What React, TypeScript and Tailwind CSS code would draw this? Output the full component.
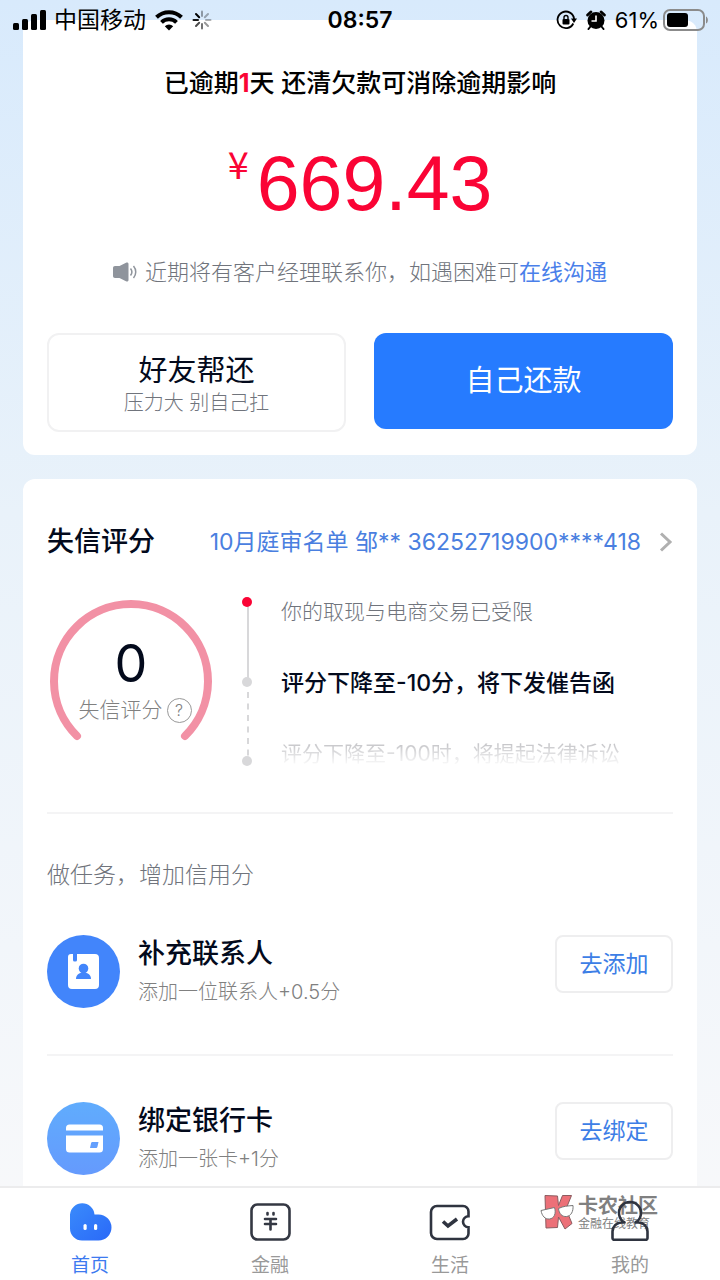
import type { ReactNode } from 'react';

interface Task {
  title: string;
  hint: string;
  action: string;
  icon: ReactNode;
}

interface Tab {
  label: string;
  active?: boolean;
  icon: ReactNode;
}

const SPINNER_OPACITY = [0.35, 0.3, 0.3, 0.4, 0.55, 0.7, 0.9, 1];

function StatusBar() {
  return (
    <header className="absolute inset-x-0 top-0 z-20 h-10 px-3 grid grid-cols-[1fr_auto_1fr] items-center text-black">
      <div className="flex items-center gap-2">
        <svg className="w-[34px] h-5" viewBox="0 0 34 20" aria-hidden="true">
          <rect x="1" y="13" width="6" height="7" rx="1.5" />
          <rect x="10" y="9" width="6" height="11" rx="1.5" />
          <rect x="19" y="4" width="6" height="16" rx="1.5" />
          <rect x="28" y="0" width="6" height="20" rx="1.5" />
        </svg>
        <span className="text-[23px] leading-8">中国移动</span>
        <svg className="w-[30px] h-[22px]" viewBox="0 0 30 22" fill="none" stroke="#000" strokeWidth="4" aria-hidden="true">
          <path d="M2.500 8.200a18 18 0 0 1 25 0" />
          <path d="M7.500 13.400a10.800 10.800 0 0 1 15 0" />
          <path d="M15 21.500l-4.200-4.300a6 6 0 0 1 8.400 0z" fill="#000" stroke="none" />
        </svg>
        <svg className="w-5 h-5" viewBox="0 0 20 20" stroke="#000" strokeWidth="2" strokeLinecap="round" aria-hidden="true">
          {SPINNER_OPACITY.map((opacity, i) => (
            <path key={i} d="M10 1.500v4.500" opacity={opacity} transform={`rotate(${i * 45} 10 10)`} />
          ))}
        </svg>
      </div>
      <span className="text-[23px] leading-8 font-semibold">08:57</span>
      <div className="flex items-center justify-end gap-2">
        <svg className="w-[21px] h-5" viewBox="0 0 21 20" fill="none" stroke="#000" strokeWidth="1.800" aria-hidden="true">
          <path d="M17.300 13.500a8.300 8.300 0 1 1 .8-4.500" />
          <path d="M15 8.500h6l-3 4.500z" fill="#000" stroke="none" />
          <rect x="6.500" y="9" width="7" height="5.500" rx="1" fill="#000" stroke="none" />
          <path d="M8 9V7.500a2 2 0 0 1 4 0V9" strokeWidth="1.400" />
        </svg>
        <svg className="w-[22px] h-5" viewBox="0 0 22 20" aria-hidden="true">
          <circle cx="11" cy="10.500" r="8.500" />
          <path d="M2.500 5 6 1.800M19.500 5 16 1.800" stroke="#000" strokeWidth="2.600" strokeLinecap="round" />
          <path d="m5.500 16.500-2 2.500M16.500 16.500l2 2.500" stroke="#000" strokeWidth="2" strokeLinecap="round" />
          <path d="M11 5.500v5.500H6.500" fill="none" stroke="#fff" strokeWidth="1.600" />
        </svg>
        <span className="text-[22px] leading-8">61%</span>
        <svg className="-ml-1 w-[45px] h-[22px]" viewBox="0 0 45 22" aria-hidden="true">
          <rect x="1" y="1" width="40" height="20" rx="6" fill="none" stroke="#8b8b8b" strokeWidth="2" />
          <rect x="4" y="4" width="21" height="14" rx="3" />
          <path d="M43 7.500c2.500 1 2.500 6 0 7z" fill="#8b8b8b" />
        </svg>
      </div>
    </header>
  );
}

function DebtCard() {
  return (
    <section className="bg-white rounded-xl px-6 pt-[45px] pb-[23px] text-center">
      <h1 className="text-[25px] leading-9 font-medium text-black">
        已逾期<span className="text-[#fa0435] font-bold">1</span>天 还清欠款可消除逾期影响
      </h1>
      <p className="mt-[42px] flex justify-center items-start gap-2 text-[#fa0435]">
        <span className="font-['Noto_Sans_CJK_SC',sans-serif] text-[38px] leading-10">¥</span>
        <span className="font-['Liberation_Sans',Arial,sans-serif] text-[77px] leading-20">669.43</span>
      </p>
      <p className="mt-[33px] flex justify-center items-center gap-2 text-[22px] leading-8 font-light text-[#70747c]">
        <svg className="w-6 h-5" viewBox="0 0 24 20" aria-hidden="true">
          <path d="M2 4h4.500L13 .8c1.200-.7 2.500-.2 2.500 1.200v16c0 1.400-1.300 1.900-2.500 1.200L6.500 16H2c-1.200 0-2-.8-2-2V6c0-1.200.8-2 2-2z" fill="#8f949c" />
          <path d="M17.500 6.500c1.600 2 1.600 5 0 7M20.500 4c3 3.500 3 8.500 0 12" fill="none" stroke="#8f949c" strokeWidth="1.500" />
        </svg>
        <span>
          近期将有客户经理联系你，如遇困难可<a href="#chat" className="font-normal text-[#4a80ea]">在线沟通</a>
        </span>
      </p>
      <div className="mt-[45px] grid grid-cols-2 gap-7 items-start">
        <button type="button" className="h-[99px] pt-1 rounded-xl border-2 border-[#f1f1f2] bg-white flex flex-col items-center justify-center">
          <span className="text-[29px] leading-9 text-[#030a1c]">好友帮还</span>
          <span className="text-[20px] leading-7 font-light text-[#70747c]">压力大 别自己扛</span>
        </button>
        <button type="button" className="h-24 rounded-xl bg-[#267bff] text-[29px] leading-9 text-white">
          自己还款
        </button>
      </div>
    </section>
  );
}

function ScoreGauge() {
  return (
    <div className="relative w-[168px] h-[168px] shrink-0">
      <svg className="absolute inset-0 w-full h-full" viewBox="0 0 168 168" aria-hidden="true">
        <path d="M30 140A77 77 0 1 1 138 140" fill="none" stroke="#f291a5" strokeWidth="8" strokeLinecap="round" />
      </svg>
      <div className="relative pt-10 flex flex-col items-center">
        <strong className="text-[52px] leading-[56px] font-normal text-[#030a1c]">0</strong>
        <span className="pl-2 flex items-center gap-1 text-[21px] leading-9 font-light text-[#808080]">
          失信评分
          <button
            type="button"
            aria-label="失信评分说明"
            className="w-[25px] h-[25px] rounded-full border border-[#999] text-[16px] leading-5"
          >
            ?
          </button>
        </span>
      </div>
    </div>
  );
}

function ScoreTimeline() {
  return (
    <div className="flex gap-7">
      <svg className="w-3 h-[172px] shrink-0" viewBox="0 0 12 172" aria-hidden="true">
        <path d="M7 6v80" stroke="#d8d8da" strokeWidth="2" />
        <path d="M7 96v64" stroke="#d8d8da" strokeWidth="2" strokeDasharray="6 5.500" />
        <circle cx="6" cy="6" r="5" fill="#fa0435" />
        <circle cx="6" cy="86" r="5" fill="#d8d8da" />
        <circle cx="6" cy="165" r="5" fill="#d8d8da" />
      </svg>
      <ul className="flex flex-col gap-[39px] text-[21px] leading-8">
        <li className="font-light text-[#70747c]">你的取现与电商交易已受限</li>
        <li className="text-[23px] font-medium text-[#030a1c]">评分下降至-10分，将下发催告函</li>
        <li className="bg-linear-to-b from-[#b8b8bc] to-white to-90% bg-clip-text text-transparent">评分下降至-100时，将提起法律诉讼</li>
      </ul>
    </div>
  );
}

const TASKS: Task[] = [
  {
    title: '补充联系人',
    hint: '添加一位联系人+0.5分',
    action: '去添加',
    icon: (
      <svg className="w-[73px] h-[73px] shrink-0" viewBox="0 0 73 73" aria-hidden="true">
        <circle cx="36.500" cy="36.500" r="36.500" fill="#4285fb" />
        <path d="M24 19h2v6a1.500 1.500 0 0 0 1.500 1.500h1A1.500 1.500 0 0 0 30 25v-6h18a4 4 0 0 1 4 4v27a4 4 0 0 1-4 4H25a4 4 0 0 1-4-4V22a3 3 0 0 1 3-3z" fill="#fff" />
        <circle cx="36.500" cy="33.500" r="4.800" fill="#4285fb" />
        <path d="M29 44c0-4 3-6.500 7.500-6.500S44 40 44 44z" fill="#4285fb" />
      </svg>
    ),
  },
  {
    title: '绑定银行卡',
    hint: '添加一张卡+1分',
    action: '去绑定',
    icon: (
      <svg className="w-[73px] h-[73px] shrink-0" viewBox="0 0 73 73" aria-hidden="true">
        <defs>
          <linearGradient id="card-bg" x1="0" y1="0" x2="0" y2="1">
            <stop offset="0" stopColor="#60acfd" />
            <stop offset="1" stopColor="#659afd" />
          </linearGradient>
        </defs>
        <circle cx="36.500" cy="36.500" r="36.500" fill="url(#card-bg)" />
        <path d="M19 28.500V26a3.500 3.500 0 0 1 3.500-3.500h30A3.500 3.500 0 0 1 56 26v2.500z" fill="#fff" />
        <path d="M19 33.500h37V47a3.500 3.500 0 0 1-3.500 3.500h-30A3.500 3.500 0 0 1 19 47z" fill="#fff" />
        <path d="M45.500 40h6l-1 4.500c-.3 1-.8 1.500-1.800 1.500H43l1-4.500c.2-1 .6-1.500 1.500-1.500z" fill="#639ffd" />
      </svg>
    ),
  },
];

function TaskRow({ task }: { task: Task }) {
  return (
    <li className="flex items-start">
      {task.icon}
      <div className="ml-[18px] pt-px flex-1">
        <h3 className="text-[27px] leading-9 font-medium text-[#030a1c]">{task.title}</h3>
        <p className="mt-1 text-[20px] leading-8 font-light text-[#808080]">{task.hint}</p>
      </div>
      <button type="button" className="w-[118px] h-[58px] rounded-lg border-2 border-[#eeeeef] text-[23px] leading-8 text-[#3d7ee6]">
        {task.action}
      </button>
    </li>
  );
}

function CreditCard() {
  return (
    <section className="mt-6 bg-white rounded-t-xl px-6 pt-[43px] pb-[11px]">
      <div className="flex items-center justify-between leading-10">
        <h2 className="text-[27px] font-medium text-[#030a1c]">失信评分</h2>
        <a href="#court-list" className="flex items-center gap-4 text-[23px] text-[#4a7fe0]">
          10月庭审名单 邹** 36252719900****418
          <svg className="w-4 h-5" viewBox="0 0 16 20" fill="none" stroke="#b0b0b0" strokeWidth="3" aria-hidden="true">
            <path d="m4 1.500 9 8.500-9 8.500" />
          </svg>
        </a>
      </div>
      <div className="mt-[34px] h-[218px] flex items-start gap-[26px] border-b-2 border-[#f4f4f5]">
        <ScoreGauge />
        <ScoreTimeline />
      </div>
      <h2 className="mt-[45px] text-[23px] leading-8 font-light text-[#70747c]">做任务，增加信用分</h2>
      <ul className="mt-11">
        <TaskRow task={TASKS[0]} />
        <li className="my-[46px] border-b-2 border-[#f4f4f5]" role="separator" />
        <TaskRow task={TASKS[1]} />
      </ul>
    </section>
  );
}

const TABS: Tab[] = [
  {
    label: '首页',
    active: true,
    icon: (
      <svg className="w-11 h-11" viewBox="0 0 44 44" aria-hidden="true">
        <defs>
          <linearGradient id="home-bg" x1="0" y1="0" x2="1" y2="1">
            <stop offset="0" stopColor="#3a8bfb" />
            <stop offset="1" stopColor="#2a69f8" />
          </linearGradient>
        </defs>
        <path d="M2 14.500A12.300 12.300 0 0 1 26.500 14.500H30.500a13 13 0 0 1 0 26H14a12 12 0 0 1-12-12z" fill="url(#home-bg)" />
        <rect x="15.500" y="24" width="3.200" height="6" rx="1.600" fill="#fff" />
        <rect x="26" y="24" width="3.200" height="6" rx="1.600" fill="#fff" />
      </svg>
    ),
  },
  {
    label: '金融',
    icon: (
      <svg className="w-11 h-11" viewBox="0 0 44 44" fill="none" stroke="#343843" strokeWidth="2.600" aria-hidden="true">
        <rect x="3.500" y="4.500" width="38" height="35" rx="6" />
        <path d="M17 19h11M17 24h11M22.500 19v10.500" strokeLinecap="round" />
        <path d="M19.500 13v1.500M25.500 13v1.500" strokeLinecap="round" />
      </svg>
    ),
  },
  {
    label: '生活',
    icon: (
      <svg className="w-11 h-11" viewBox="0 0 44 44" fill="none" stroke="#2f3440" strokeWidth="2.600" aria-hidden="true">
        <path d="M9 6h26a5.500 5.500 0 0 1 5.500 5.500v4.800a5.500 5.500 0 0 0 0 11v6.200A5.500 5.500 0 0 1 35 39H9a6 6 0 0 1-6-6V12a6 6 0 0 1 6-6z" />
        <path d="m15 21.500 5 4.500 9-7" strokeWidth="3.600" />
      </svg>
    ),
  },
  {
    label: '我的',
    icon: (
      <svg className="w-11 h-11" viewBox="0 0 44 44" fill="none" stroke="#2f3440" strokeWidth="2.600" strokeLinejoin="round" aria-hidden="true">
        <path d="M16.500 22.500a11 11 0 1 1 11 0h3a9 9 0 0 1 9 9V38a1.800 1.800 0 0 1-1.800 1.800H6.300A1.800 1.800 0 0 1 4.500 38v-6.500a9 9 0 0 1 9-9z" />
      </svg>
    ),
  },
];

function ForumBadge() {
  return (
    <div className="absolute right-[62px] top-1 flex items-center gap-1 text-[#808080]">
      <svg className="w-[34px] h-9" viewBox="0 0 34 36" aria-hidden="true">
        <g fill="#ec7078" stroke="#8b5c60" strokeWidth="1">
          <path d="M5 1.500 17.500 2l1 9.500L22.500 1.500h9L26 15l6 14.500-7 5.500-6.500-12-1 10.500-11.500 .5z" />
        </g>
        <g fill="#fff" stroke="#777" strokeWidth="1">
          <path d="M1 16.500 14.500 13.500c2 6-.5 11-5 11.500-4.500.4-7.500-3-8.500-8.500z" />
          <path d="M18.500 14.500c5-2.500 9-2.500 14.500-3 .5 6-2 10.500-6.500 11-4.500.5-7.500-3-8-8z" />
        </g>
      </svg>
      <div className="pt-1">
        <p className="text-[20px] leading-5 font-bold">卡农社区</p>
        <p className="text-[12px] leading-4">金融在线教育</p>
      </div>
    </div>
  );
}

function TabBar() {
  return (
    <nav className="sticky bottom-0 z-10 bg-white border-t-2 border-[#ececed]">
      <ForumBadge />
      <div className="relative grid grid-cols-4">
        {TABS.map((tab) => (
          <a
            key={tab.label}
            href="#"
            className={`pt-3 pb-0.5 flex flex-col items-center gap-2.5 text-[19px] leading-6 ${tab.active ? 'text-[#3d7af0]' : 'text-[#999]'}`}
          >
            {tab.icon}
            {tab.label}
          </a>
        ))}
      </div>
    </nav>
  );
}

export default function App() {
  return (
    <div className="relative min-h-screen flex flex-col bg-linear-to-b from-[#d8eafc] via-[#e9f2fa] via-40% to-[#f9f9fa] font-['Inter','Noto_Sans_CJK_SC',sans-serif]">
      <StatusBar />
      <main className="flex-1 px-[23px] pt-5">
        <DebtCard />
        <CreditCard />
      </main>
      <TabBar />
    </div>
  );
}
